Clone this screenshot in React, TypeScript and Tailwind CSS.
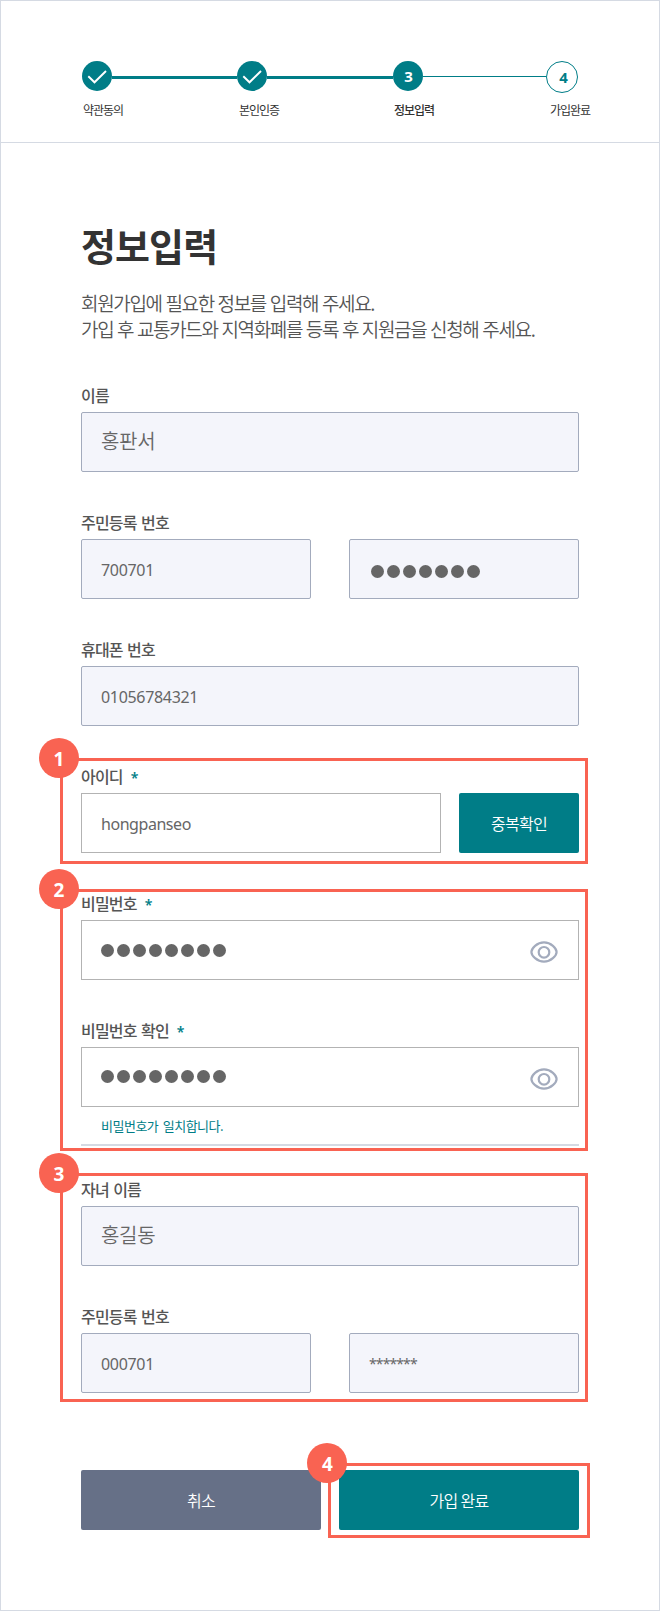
import type { ReactNode } from "react";

const KR = "font-['Noto_Sans_CJK_KR',sans-serif]";
const LATIN = "font-['Noto_Sans','Noto_Sans_CJK_KR',sans-serif]";

function CheckCircle() {
  return (
    <svg width="30" height="30" viewBox="0 0 30 30" className="shrink-0">
      <circle cx="15" cy="15" r="15" fill="#007d87" />
      <path d="M6.3 15.3 L12.5 21.3 L24 10" fill="none" stroke="#fff" strokeWidth="1.9" />
    </svg>
  );
}

function Stepper() {
  return (
    <header className="h-[142px] border-b border-[#d5dae3] pt-[60px]">
      <div className="flex items-start pl-[81px]">
        <CheckCircle />
        <div className="mt-[15px] h-[3px] w-[125px] bg-[#007d87]" />
        <CheckCircle />
        <div className="mt-[15px] h-[3px] w-[126px] bg-[#007d87]" />
        <div className={`${LATIN} flex h-[30px] w-[30px] items-center justify-center rounded-full bg-[#007d87] pt-px pl-px text-[15px] font-bold text-white`}>
          3
        </div>
        <div className="mt-[15px] h-px w-[123px] bg-[#007d87]" />
        <div className={`${LATIN} flex h-8 w-8 items-center justify-center rounded-full border border-[#007d87] pt-px pl-[3px] text-[15px] font-bold text-[#007d87]`}>
          4
        </div>
      </div>
      <div className={`${KR} mt-[8px] flex pl-[82px] text-[12px] leading-[18px] tracking-[-1px] text-[#333]`}>
        <span className="w-[156px]">약관동의</span>
        <span className="w-[155px]">본인인증</span>
        <span className="w-[156px] font-medium">정보입력</span>
        <span>가입완료</span>
      </div>
    </header>
  );
}

function Field({ label, required, className, children }: { label: string; required?: boolean; className?: string; children: ReactNode }) {
  return (
    <div className={className}>
      <div className={`${KR} flex h-[28px] items-start text-[16px] leading-[22px] font-medium tracking-[-0.8px] text-[#555] [word-spacing:1.5px]`}>
        {label}
        {required && <span className={`${LATIN} ml-[8px] pt-[2px] text-[14px] font-semibold text-[#007d87]`}>*</span>}
      </div>
      {children}
    </div>
  );
}

function Box({ locked, className = "", children }: { locked?: boolean; className?: string; children: ReactNode }) {
  return (
    <div
      className={`flex h-[60px] items-center border px-[19px] text-[#666] ${
        locked ? "rounded-[2px] border-[#a3abbd] bg-[#f4f5fb]" : "border-[#b3b3b3] bg-white"
      } ${className}`}
    >
      {children}
    </div>
  );
}

function KrValue({ children }: { children: ReactNode }) {
  return <span className={`${KR} pb-[2px] text-[20px] leading-[30px] font-[350] tracking-[-0.3px]`}>{children}</span>;
}

function Value({ children }: { children: ReactNode }) {
  return <span className={`${LATIN} pt-[2px] text-[16px] leading-[24px] tracking-[-0.45px]`}>{children}</span>;
}

function NumberValue({ children }: { children: ReactNode }) {
  return <span className={`${LATIN} pt-[2px] text-[16px] leading-[24px] tracking-[-0.32px]`}>{children}</span>;
}

function Dots({ count, className = "" }: { count: number; className?: string }) {
  return (
    <span className={`flex gap-[3px] ${className}`}>
      {Array.from({ length: count }, (_, i) => (
        <span key={i} className="h-[13px] w-[13px] rounded-full bg-[#666]" />
      ))}
    </span>
  );
}

function Eye() {
  return (
    <svg width="28" height="22" viewBox="0 0 28 22" className="mt-[3px] mr-px ml-auto" fill="none" stroke="#a3abbd" strokeWidth="2.2">
      <path d="M1.4 11 C1.4 7.5 7 1.4 14 1.4 S26.6 7.5 26.6 11 S21 20.6 14 20.6 S1.4 14.5 1.4 11 Z" />
      <circle cx="14" cy="11.3" r="5.3" />
    </svg>
  );
}

function Callout({ n, className }: { n: number; className: string }) {
  return (
    <div className={`pointer-events-none absolute border-[3px] border-[#f96352] ${className}`}>
      <span className={`${LATIN} absolute -top-[23px] -left-[24px] flex h-10 w-10 items-center justify-center rounded-full bg-[#f96352] pt-[2px] text-[19px] font-bold text-white`}>
        {n}
      </span>
    </div>
  );
}

export default function App() {
  return (
    <div className="h-[1611px] w-[660px] border border-[#d5dae3] bg-white">
      <Stepper />
      <main className="w-[578px] pl-[80px]">
        <h1 className={`${KR} pt-[74px] text-[38px] leading-[56px] font-bold tracking-[-0.9px] text-[#333]`}>정보입력</h1>
        <p className={`${KR} mt-[17px] text-[19px] leading-[26px] font-[350] tracking-[-1.35px] whitespace-nowrap text-[#555] [word-spacing:0.9px]`}>
          회원가입에 필요한 정보를 입력해 주세요.
          <br />
          가입 후 교통카드와 지역화폐를 등록 후 지원금을 신청해 주세요.
        </p>

        <Field label="이름" className="mt-[42px]">
          <Box locked>
            <KrValue>홍판서</KrValue>
          </Box>
        </Field>
        <Field label="주민등록 번호" className="mt-[39px]">
          <div className="flex gap-[38px]">
            <Box locked className="w-[230px]">
              <NumberValue>700701</NumberValue>
            </Box>
            <Box locked className="w-[230px]">
              <Dots count={7} className="mt-[5px] ml-[2px]" />
            </Box>
          </div>
        </Field>
        <Field label="휴대폰 번호" className="mt-[39px]">
          <Box locked>
            <NumberValue>01056784321</NumberValue>
          </Box>
        </Field>

        <section className="relative mt-[39px]">
          <Field label="아이디" required>
            <div className="flex gap-[18px]">
              <Box className="w-[360px]">
                <Value>hongpanseo</Value>
              </Box>
              <button className={`${KR} h-[60px] w-[120px] rounded-[2px] bg-[#007d87] text-[16px] font-[350] tracking-[-0.7px] text-white`}>
                중복확인
              </button>
            </div>
          </Field>
          <Callout n={1} className="-top-[7px] -left-[21px] h-[106px] w-[528px]" />
        </section>

        <section className="relative mt-[39px] border-b-2 border-[#d5dae3]">
          <Field label="비밀번호" required>
            <Box>
              <Dots count={8} />
              <Eye />
            </Box>
          </Field>
          <Field label="비밀번호 확인" required className="mt-[39px]">
            <Box>
              <Dots count={8} className="mb-px" />
              <Eye />
            </Box>
          </Field>
          <p className={`${KR} h-[37px] pt-[9px] pl-[20px] text-[13px] leading-[20px] tracking-[-0.5px] text-[#007d87] [word-spacing:2px]`}>
            비밀번호가 일치합니다.
          </p>
          <Callout n={2} className="-top-[3px] -left-[21px] h-[262px] w-[528px]" />
        </section>

        <section className="relative mt-[32px]">
          <Field label="자녀 이름">
            <Box locked>
              <KrValue>홍길동</KrValue>
            </Box>
          </Field>
          <Field label="주민등록 번호" className="mt-[39px]">
            <div className="flex gap-[38px]">
              <Box locked className="w-[230px]">
                <NumberValue>000701</NumberValue>
              </Box>
              <Box locked className="w-[230px]">
                <span className={`${LATIN} pt-px text-[14px] leading-[24px] tracking-[-0.9px]`}>*******</span>
              </Box>
            </div>
          </Field>
          <Callout n={3} className="-top-[5px] -left-[21px] h-[229px] w-[528px]" />
        </section>

        <section className={`${KR} relative mt-[77px] flex gap-[18px] text-[16px] font-[350] tracking-[-0.7px] text-white`}>
          <button className="h-[60px] w-[240px] rounded-[2px] bg-[#667087]">취소</button>
          <button className="h-[60px] w-[240px] rounded-[2px] bg-[#007d87]">가입 완료</button>
          <Callout n={4} className="-top-[7px] left-[247px] h-[75px] w-[262px]" />
        </section>
      </main>
    </div>
  );
}
